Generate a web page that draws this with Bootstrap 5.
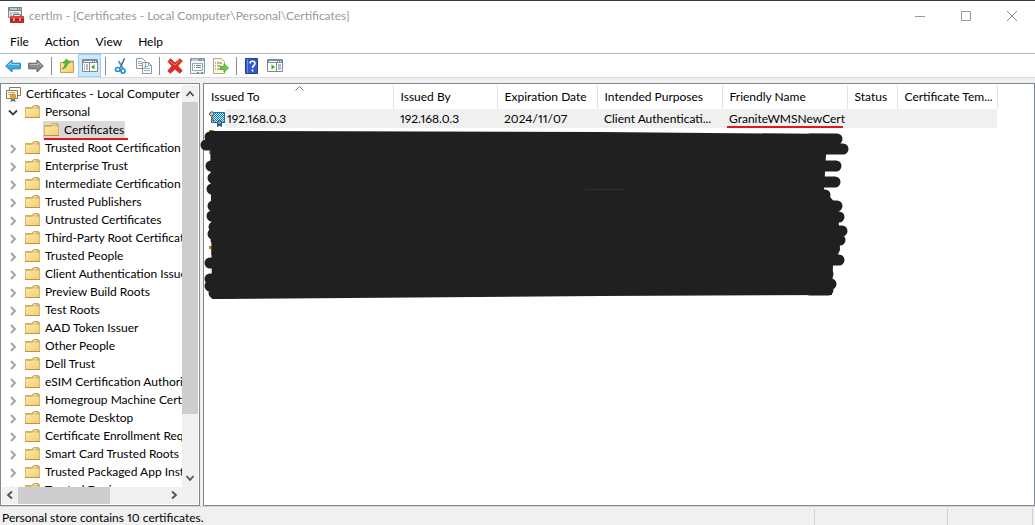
<!DOCTYPE html>
<html lang="en">
<head>
<meta charset="utf-8">
<meta name="viewport" content="width=device-width, initial-scale=1">
<title>certlm - [Certificates - Local Computer\Personal\Certificates]</title>
<link href="https://cdn.jsdelivr.net/npm/bootstrap@5.3.0/dist/css/bootstrap.min.css" rel="stylesheet">
<style>
body { font: 12px/18px Lato, "Open Sans", sans-serif; font-variant-numeric: proportional-nums; color: #000; background: #f0f0f0; }
button { font: inherit; color: inherit; background: none; border: 0; padding: 0; }
svg { display: block; flex: none; }
.titlebar { height: 30px; border-top: 1px solid #3c3c3c; color: #999; }
.caption-btn { width: 46px; height: 28px; display: grid; place-items: center; }
.menubar { height: 24px; border-bottom: 1px solid #b4b6c0; padding-left: 10px; }
.menubar button { height: 23px; }
.toolbar { height: 24px; border-bottom: 1px solid #dcdcdc; padding-left: 1px; }
.tool { width: 23px; height: 23px; display: grid; place-items: center; }
.tool.active { background: #cce8ff; border: 1px solid #99d1ff; }
.tool-sep { width: 8px; height: 18px; display: flex; justify-content: center; }
.tool-sep::before { content: ""; width: 1px; background: #8c8c8c; }
.panes { padding-top: 5px; gap: 3px; min-height: 0; }
.pane { background: #fff; border: 1px solid #828790; min-height: 0; }
.tree-pane { width: 200px; padding: 1px; }
.tree-view { min-width: 0; min-height: 0; overflow: hidden; white-space: nowrap; }
.tree-row { height: 18px; display: flex; align-items: center; }
.twisty { width: 21px; height: 16px; margin-right: 2px; display: grid; place-items: center; flex: none; align-self: flex-end; }
.tree-row .label { padding: 0 4px; margin-left: 1px; }
.child-row { margin-left: 41px; width: 82px; padding-left: 1px; background: #d9d9d9; }
.child-row .label { position: relative; }
.child-row .label::after { content: ""; position: absolute; left: -16px; right: 0; bottom: -1px; height: 2px; background: #e3161f; }
.vbar { width: 16px; background: #f0f0f0; }
.hbar { height: 17px; background: #f0f0f0; }
.bar-btn { width: 16px; height: 17px; display: grid; place-items: center; flex: none; }
.thumb { background: #cdcdcd; }
.vbar .thumb { flex: 312 1 0; }
.vbar .track { flex: 56 1 0; }
.hbar .thumb { flex: 91 1 0; }
.hbar .track { flex: 56 1 0; }
.list-pane { padding: 1px 0; }
.cert-table { table-layout: fixed; width: 793px; margin: 0; }
.cert-table th, .cert-table td { font-weight: 400; padding: 0 0 0 7px; white-space: nowrap; overflow: hidden; }
.cert-table th { height: 24px; border-right: 1px solid #e2e2e2; }
.cert-table td { height: 19px; background: #f0f0f0; line-height: 18px; }
.cert-table td:first-child { background: linear-gradient(90deg, #fff 21px, #f0f0f0 21px); padding-left: 5px; }
.sort-mark { position: absolute; left: 91px; top: 2px; }
.friendly { position: relative; }
.friendly::after { content: ""; position: absolute; left: -2px; right: 2px; bottom: -2px; height: 2px; background: #e3161f; }
.scribble { position: absolute; left: -4px; top: 45px; }
.statusbar { height: 20px; border-top: 1px solid #d7d7d7; padding-left: 2px; }
.status-cell { border-left: 1px solid #d0d0d0; margin-top: 2px; }
</style>
</head>
<body class="vh-100 d-flex flex-column overflow-hidden">

<svg width="0" height="0" class="position-absolute" aria-hidden="true">
  <defs>
    <linearGradient id="fold" x1="0" y1="0" x2="1" y2="1"><stop offset="0" stop-color="#ffeaa9"/><stop offset="1" stop-color="#f2cd72"/></linearGradient>
    <pattern id="sel" width="2" height="2" patternUnits="userSpaceOnUse"><path fill="#d6eefb" d="M0 0h2v2H0z"/><path fill="#0078d7" d="M0 0h1v1H0zM1 1h1v1H1z"/></pattern>
    <symbol id="folder" viewBox="0 0 15 16"><path d="M.5 3.500h6l2-2h5l1 1v11H.5z" fill="#e8c067" stroke="#d3ab52"/><path d="M9 2.500h4.500v1H9z" fill="#fff"/><path d="M11.500 2.500h2v1h-2z" fill="#3d9be0"/><path d="M.5 4.500H7l1.500-1 6 1v9H.5z" fill="url(#fold)" stroke="#dcb867"/><path d="M0 13.500h15" stroke="#bd9440"/></symbol>
    <symbol id="closed" viewBox="0 0 8 10"><path d="m2 1 4 4-4 4" fill="none" stroke="#a0a0a0" stroke-width="1.800"/></symbol>
  </defs>
</svg>

<header class="bg-white">
  <div class="titlebar d-flex align-items-center">
    <svg class="ms-2 me-1" width="17" height="17" viewBox="0 0 17 17"><path d="M.5.5h13v10H.5z" fill="#e8edf0" stroke="#78848c"/><path d="M1 1h12v3H1z" fill="#7d8a92"/><path d="M2 2h7M10 2h1M12 2h1" stroke="#fff"/><path d="M3 5v5M5 6h6" stroke="#8b969d"/><path d="M5.500 9V7.500h7V9" fill="none" stroke="#777"/><path d="M2 9h14v7H2z" fill="#c62828"/><path d="M2 9h14v3H2z" fill="#e44040"/><path d="M2 12.500h14" stroke="#8e1717"/><path d="M5 11h2v3H5zM11 11h2v3h-2z" fill="#d9a4a4"/></svg>
    <span class="flex-grow-1 text-truncate">certlm - [Certificates - Local Computer\Personal\Certificates]</span>
    <button class="caption-btn" aria-label="Minimize"><svg width="10" height="10"><path d="M0 5.500h10" stroke="#999"/></svg></button>
    <button class="caption-btn" aria-label="Maximize"><svg width="10" height="10"><path d="M.5.5h9v9h-9z" fill="none" stroke="#999"/></svg></button>
    <button class="caption-btn" aria-label="Close"><svg width="10" height="10"><path d="m0 0 10 10M10 0 0 10" stroke="#888"/></svg></button>
  </div>
  <nav class="menubar d-flex align-items-center gap-3" aria-label="Main menu">
    <button>File</button><button>Action</button><button>View</button><button>Help</button>
  </nav>
  <div class="toolbar d-flex align-items-center" role="toolbar" aria-label="Tools">
    <button class="tool" aria-label="Back"><svg width="16" height="14" viewBox="0 0 16 14"><path d="M.7 7 7 1v3.200h8.300v5.600H7V13z" fill="#35aee8" stroke="#2579ae"/><path d="M2.500 6.800 6 3.500v2h8" fill="none" stroke="#8fdcfb"/></svg></button>
    <button class="tool" aria-label="Forward"><svg width="16" height="14" viewBox="0 0 16 14"><path d="M15.300 7 9 1v3.200H.7v5.600H9V13z" fill="#8c8c8c" stroke="#5f5f5f"/><path d="M2 5.500h8v-2l3.500 3.300" fill="none" stroke="#bdbdbd"/></svg></button>
    <span class="tool-sep"></span>
    <button class="tool" aria-label="Up one level"><svg width="16" height="16" viewBox="0 0 16 16"><path d="M1.500 4.500h6l1-1.500h6v11.500h-13z" fill="url(#fold)" stroke="#c9a04b"/><path d="M11 4h3" stroke="#3d9be0"/><path d="M3.500 11C7 10 8.500 8 8.500 5H11L7.500 1 4 5h2.300C6.300 7.500 5 9 3.500 11z" fill="#55c52e" stroke="#2f8f1c" stroke-width=".7"/></svg></button>
    <button class="tool active" aria-label="Show console tree" aria-pressed="true"><svg width="16" height="13" viewBox="0 0 16 13"><path d="M.5.5h15v12H.5z" fill="#fff" stroke="#7c8a96"/><path d="M1 1h14v3H1z" fill="#7c8a96"/><path d="M2 2.500h8M11 2.500h1M13 2.500h1" stroke="#fff"/><path d="M7.500 4v8" stroke="#7c8a96"/><path d="M2 6h1M4 6h2M2 8h1M4 8h2M2 10h1M4 10h2" stroke="#777"/><path d="M12.500 5.500v5L9 8z" fill="#37a91f"/></svg></button>
    <span class="tool-sep"></span>
    <button class="tool" aria-label="Cut"><svg width="16" height="16" viewBox="0 0 16 16"><path d="M11.500.5 7 10M5.500 3 10 10.500" stroke="#5e8cae" stroke-width="1.700"/><path d="M11.500.5 8 8" stroke="#2b5878" stroke-width=".7"/><ellipse cx="4.800" cy="11.500" rx="2.300" ry="2" fill="none" stroke="#168fd8" stroke-width="1.600"/><ellipse cx="10" cy="13" rx="2" ry="2.200" fill="none" stroke="#168fd8" stroke-width="1.600"/></svg></button>
    <button class="tool" aria-label="Copy"><svg width="16" height="16" viewBox="0 0 16 16"><path d="M.5.500h6l3 3v7h-9zM6.500 4.500h6l3 3v8h-9z" fill="#fff" stroke="#8b98a3"/><path d="M2 3.500h4M2 5.500h4M2 7.500h4M8 8.500h4M8 10.500h6M8 12.500h6" stroke="#8fb2cd"/><path d="M12.500 4.500v3h3" fill="none" stroke="#8b98a3"/></svg></button>
    <span class="tool-sep"></span>
    <button class="tool" aria-label="Delete"><svg width="16" height="16" viewBox="0 0 16 16"><path d="M1 3.500 3.500.7 8 5 13 .7 15.300 3 10.800 8l4.500 4.700-2.500 2.600L8 11l-4.700 4.300L.7 13 5 8z" fill="#e32b23" stroke="#b51a15" stroke-width=".7"/><path d="m2.500 3 5.500 4 4.500-4.500" fill="none" stroke="#f57b70"/></svg></button>
    <button class="tool" aria-label="Properties"><svg width="15" height="16" viewBox="0 0 15 16"><path d="M.5.500h14v15H.5z" fill="#f5f5f5" stroke="#8b98a3"/><path d="M1 1h13v2H1z" fill="#8b98a3"/><path d="M2 2h6M12 2h1" stroke="#fff"/><path d="M2.500 5.500h10v7h-10z" fill="#fff" stroke="#9ba5ad"/><path d="M6 7.500h5M6 9.500h5" stroke="#789"/><path d="M4 7.500h1M4 9.500h1M7 14.500h2M11 14.500h2" stroke="#12a5e5"/></svg></button>
    <button class="tool" aria-label="Export list"><svg width="16" height="16" viewBox="0 0 16 16"><path d="M.5.500h8l3 3v12H.5z" fill="#fff8e1" stroke="#b3a98f"/><path d="M2 5h1M4 5h5M2 8h1M4 8h4M2 11h1M4 11h4" stroke="#777"/><path d="M7.500 8.500H11V5.800l4.500 4.300L11 14.300v-2.700H7.500z" fill="#6ccc3b" stroke="#43a024" stroke-width=".8"/></svg></button>
    <span class="tool-sep"></span>
    <button class="tool" aria-label="Help"><svg width="13" height="16" viewBox="0 0 13 16"><path d="M.5.500h12v15H.5z" fill="#315bc5" stroke="#223f92"/><path d="M2.500 1v14" stroke="#6d8ee0"/><path d="M5 5.500c0-3 5-3 5 0 0 2-2.500 2-2.500 4.500M7.500 11.500v2" fill="none" stroke="#fff" stroke-width="1.600"/></svg></button>
    <button class="tool" aria-label="Show action pane"><svg width="16" height="13" viewBox="0 0 16 13"><path d="M.5.500h15v12H.5z" fill="#fff" stroke="#7c8a96"/><path d="M1 1h14v3H1z" fill="#7c8a96"/><path d="M2 2.500h8M11 2.500h1M13 2.500h1" stroke="#fff"/><path d="M9.500 4v8" stroke="#7c8a96"/><path d="M11 6h3M11 8h3M11 10h3" stroke="#777"/><path d="M4.500 5.500v5L8 8z" fill="#37a91f"/></svg></button>
  </div>
</header>

<main class="panes d-flex flex-grow-1">
  <aside class="pane tree-pane d-flex flex-column flex-shrink-0">
    <div class="d-flex flex-grow-1 overflow-hidden">
      <nav class="tree-view flex-grow-1" aria-label="Console tree">
        <ul class="list-unstyled m-0" id="tree">
          <li><div class="tree-row"><svg class="ms-1" width="15" height="16" viewBox="0 0 15 16"><path d="M3.500 1.500h11v8h-11z" fill="#fff" stroke="#8a7b55"/><path d="M.5 4.500h11v8H.5z" fill="#fffdf3" stroke="#8a7b55"/><path d="M2 6.500h7M2 8.500h3" stroke="#aaa"/><path d="m5.500 11-1 5 2.500-1 2.500 1-1-5z" fill="#2878dc"/><circle cx="7" cy="10.500" r="2.800" fill="#eaa51c" stroke="#b87910" stroke-width=".6"/></svg><span class="label">Certificates - Local Computer</span></div></li>
          <li><div class="tree-row"><button class="twisty" aria-label="Collapse Personal"><svg width="10" height="8"><path d="m1 1.500 4 4 4-4" fill="none" stroke="#404040" stroke-width="1.800"/></svg></button><svg width="15" height="16"><use href="#folder"/></svg><span class="label">Personal</span></div>
            <ul class="list-unstyled m-0"><li><div class="tree-row child-row"><svg width="15" height="16"><use href="#folder"/></svg><span class="label">Certificates</span></div></li></ul>
          </li>
        </ul>
      </nav>
      <div class="vbar d-flex flex-column"><button class="bar-btn" aria-label="Scroll up"><svg width="10" height="8"><path d="m1.500 6 3.500-4 3.500 4" fill="none" stroke="#505050" stroke-width="1.800"/></svg></button><div class="thumb"></div><div class="track"></div><button class="bar-btn" aria-label="Scroll down"><svg width="10" height="8"><path d="m1.500 2 3.500 4 3.500-4" fill="none" stroke="#505050" stroke-width="1.800"/></svg></button></div>
    </div>
    <div class="hbar d-flex pe-3"><button class="bar-btn" aria-label="Scroll left"><svg width="8" height="10"><path d="M6 1.500 2 5l4 3.500" fill="none" stroke="#505050" stroke-width="1.800"/></svg></button><div class="thumb"></div><div class="track"></div><button class="bar-btn" aria-label="Scroll right"><svg width="8" height="10"><path d="m2 1.500 4 3.500-4 3.500" fill="none" stroke="#505050" stroke-width="1.800"/></svg></button></div>
  </aside>

  <section class="pane list-pane flex-grow-1 position-relative" aria-label="Certificates">
    <table class="cert-table">
      <colgroup><col style="width:189px"><col style="width:104px"><col style="width:100px"><col style="width:125px"><col style="width:125px"><col style="width:50px"><col style="width:100px"></colgroup>
      <thead><tr><th>Issued To</th><th>Issued By</th><th>Expiration Date</th><th>Intended Purposes</th><th>Friendly Name</th><th>Status</th><th>Certificate Tem...</th></tr></thead>
      <tbody><tr>
        <td><div class="d-flex align-items-center gap-2px"><svg width="18" height="16" viewBox="0 0 18 16"><path d="M2 2h14v10H2z" fill="url(#sel)"/><path d="M5 1.500h10.500v10H2.500V6" fill="none" stroke="#1c6f9e"/><circle cx="2.800" cy="3" r="2.200" fill="#d8bf78" stroke="#2a6484"/><path d="M3 5.500v4h2" fill="none" stroke="#87703a" stroke-width="1.500"/><path d="M8 11h5v5l-2.500-1L8 16z" fill="#1464d2"/><circle cx="10.500" cy="11.500" r="2" fill="#c9a53b" stroke="#246"/></svg><span>192.168.0.3</span></div></td>
        <td>192.168.0.3</td><td>2024/11/07</td><td>Client Authenticati...</td><td><span class="friendly">GraniteWMSNewCert</span></td><td></td><td></td>
      </tr></tbody>
    </table>
    <svg class="sort-mark" width="9" height="5"><path d="m.5 4.500 4-4 4 4" fill="none" stroke="#777"/></svg>
    <svg class="scribble" width="652" height="171" viewBox="200 129 652 171" aria-hidden="true">
      <path d="M209 130h5v3h-5zM209 151h3v3h-3zM211 154h1v5h-1zM209 246h3v3h-3zM211 249h1v6h-1z" fill="#a87a32"/>
      <path d="M210 131 600 132 838 134 826 155 824 190 838 206 840 250 833 265 832 295 600 296 212 299 211 200z" fill="#202020"/>
      <g stroke="#202020" stroke-width="11" stroke-linecap="round">
        <path d="M210 137h20M206 145h20M211 166h20M213 178h20M212 189h20M213 206h20M212 216h20M214 227h20M213 234h20M216 240h20M210 263h20M210 279h20M210 286h20M214 293h20"/>
        <path d="M810 139h27M810 149h33M810 166h26M810 182h25M810 195h15M810 206h27M810 217h29M810 231h32M810 240h30M810 260h29M810 274h18M810 284h21M810 290h18"/>
      </g>
      <path d="M585 189.500h41" stroke="#303030"/>
    </svg>
  </section>
</main>

<footer class="statusbar d-flex">
  <span class="flex-grow-1 pt-1 lh-1 align-self-center">Personal store contains 10 certificates.</span>
  <span class="status-cell" style="width:133px"></span><span class="status-cell" style="width:85px"></span><span class="status-cell" style="width:3px"></span>
</footer>

<script>
const stores = ["Trusted Root Certification Authorities", "Enterprise Trust", "Intermediate Certification Authorities", "Trusted Publishers", "Untrusted Certificates", "Third-Party Root Certification Authorities", "Trusted People", "Client Authentication Issuers", "Preview Build Roots", "Test Roots", "AAD Token Issuer", "Other People", "Dell Trust", "eSIM Certification Authorities", "Homegroup Machine Certificates", "Remote Desktop", "Certificate Enrollment Requests", "Smart Card Trusted Roots", "Trusted Packaged App Installation Authorities", "Trusted Devices"];
document.getElementById("tree").insertAdjacentHTML("beforeend", stores.map(name =>
  `<li><div class="tree-row"><button class="twisty" aria-label="Expand ${name}"><svg width="8" height="10"><use href="#closed"/></svg></button><svg width="15" height="16"><use href="#folder"/></svg><span class="label">${name}</span></div></li>`).join(""));
</script>
<script src="https://cdn.jsdelivr.net/npm/bootstrap@5.3.0/dist/js/bootstrap.bundle.min.js"></script>
</body>
</html>
